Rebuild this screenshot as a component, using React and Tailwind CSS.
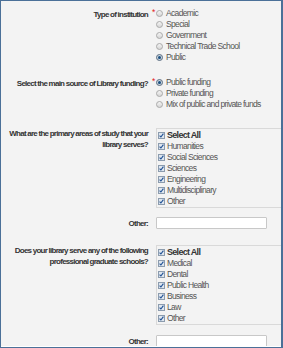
import React from "react";

const font = { fontFamily: '"Liberation Sans", Arial, sans-serif' };

function Radio({ checked }) {
  return (
    <span
      className={`flex h-[7px] w-[7px] shrink-0 items-center justify-center rounded-full border ${
        checked ? "border-[#5d6f82] bg-[#c9d3dd]" : "border-[#a9a9a9] bg-gradient-to-b from-[#f4f4f4] to-[#d6d6d6]"
      }`}
    >
      {checked && <span className="h-[3px] w-[3px] rounded-full bg-[#1a4f80]" />}
    </span>
  );
}

function Check() {
  return (
    <span className="flex h-[7px] w-[7px] shrink-0 items-center justify-center border border-[#8c9cae] bg-[#dfe6ee]">
      <svg width="5" height="5" viewBox="0 0 5 5">
        <path d="M0.6 2.6 L1.9 4 L4.4 0.6" fill="none" stroke="#1c4e93" strokeWidth="1.1" />
      </svg>
    </span>
  );
}

function Label({ children, className = "" }) {
  return (
    <div className={`w-[147px] shrink-0 whitespace-nowrap text-right text-[8px] font-bold leading-[11px] tracking-[-0.75px] text-[#333] ${className}`}>
      {children}
    </div>
  );
}

function Star({ show }) {
  return (
    <div className="w-[8px] shrink-0 pl-[4px] text-[8.5px] leading-[9px] text-[#e02020]">
      {show ? "*" : ""}
    </div>
  );
}

function RadioGroup({ items, selected }) {
  return (
    <div className="flex flex-col">
      {items.map((t) => (
        <div key={t} className="flex h-[11px] items-center gap-[3px] whitespace-nowrap text-[8.5px] tracking-[-0.65px] text-[#555]">
          <Radio checked={t === selected} />
          <span>{t}</span>
        </div>
      ))}
    </div>
  );
}

function CheckList({ items }) {
  return (
    <div className="w-[140px] shrink-0 border border-[#d9d9d9] pl-[1px] pt-[1px]">
      <div className="flex h-[11px] items-center gap-[2px] whitespace-nowrap text-[9px] font-bold tracking-[-0.7px] text-[#333]">
        <Check />
        <span>Select All</span>
      </div>
      {items.map((t) => (
        <div key={t} className="flex h-[11px] items-center gap-[2px] whitespace-nowrap text-[8.5px] tracking-[-0.65px] text-[#555]">
          <Check />
          <span>{t}</span>
        </div>
      ))}
    </div>
  );
}

function OtherRow({ className = "" }) {
  return (
    <div className={`flex items-center ${className}`}>
      <Label>Other:</Label>
      <Star />
      <div className="h-[12px] w-[111px] shrink-0 rounded-[1px] border border-[#c8c8c8] bg-white" />
    </div>
  );
}

export default function App() {
  return (
    <div style={font} className="h-[348px] w-[283px] overflow-hidden border-b border-l border-r-2 border-t border-[#4b7098]">
      <div className="h-full overflow-hidden border-b border-white bg-[#f3f3f3] pt-[7px]">
        <div className="flex">
          <Label className="pt-[1px]">Type of institution</Label>
          <Star show />
          <RadioGroup
            items={["Academic", "Special", "Government", "Technical Trade School", "Public"]}
            selected="Public"
          />
        </div>

        <div className="mt-[14px] flex">
          <Label className="pt-[1px]">Select the main source of Library funding?</Label>
          <Star show />
          <RadioGroup
            items={["Public funding", "Private funding", "Mix of public and private funds"]}
            selected="Public funding"
          />
        </div>

        <div className="mt-[18px] flex overflow-hidden">
          <Label>
            What are the primary areas of study that your
            <br />
            library serves?
          </Label>
          <Star />
          <CheckList
            items={["Humanities", "Social Sciences", "Sciences", "Engineering", "Multidisciplinary", "Other"]}
          />
        </div>

        <OtherRow className="mt-[9px]" />

        <div className="mt-[16px] flex overflow-hidden">
          <Label>
            Does your library serve any of the following
            <br />
            professional graduate schools?
          </Label>
          <Star />
          <CheckList items={["Medical", "Dental", "Public Health", "Business", "Law", "Other"]} />
        </div>

        <OtherRow className="mt-[10px]" />
      </div>
    </div>
  );
}
